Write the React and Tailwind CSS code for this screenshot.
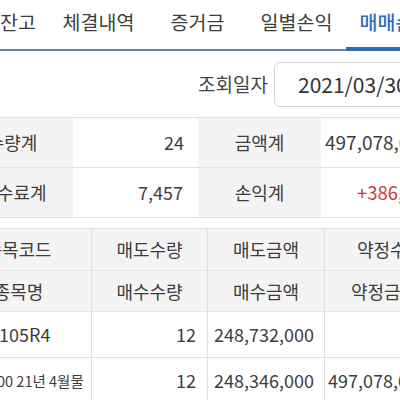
import React from "react";

const tabs = ["잔고", "체결내역", "증거금", "일별손익", "매매손익"];

const App = () => {
  return (
    <div className="w-[400px] h-[400px] overflow-hidden bg-white text-[#3d3d3d] font-['Noto_Sans_CJK_KR',sans-serif]">
      {/* Tabs */}
      <div className="flex h-[51px] w-[460px]">
        {tabs.map((t, i) => (
          <div
            key={t}
            className={
              i === 0
                ? "w-[49px] shrink-0 flex items-center pb-[5px] text-[19.5px] border-b-2 border-[#5a87c4]"
                : i === 4
                ? "w-[99px] shrink-0 flex items-center justify-center pb-[3px] text-[19.5px] font-medium text-[#2c6cb8] border-b-4 border-[#2f6db5]"
                : "w-[99px] shrink-0 flex items-center justify-center pb-[5px] text-[19.5px] border-b-2 border-[#5a87c4]"
            }
          >
            {t}
          </div>
        ))}
      </div>

      {/* Search date */}
      <div className="flex items-center justify-end mt-[11px] h-[45px] -mr-[40px]">
        <span className="text-[19px] text-[#444]">조회일자</span>
        <div className="ml-[6px] w-[166px] h-[45px] flex items-center pl-[23px] border border-[#d6d6d6] rounded-md text-[21px] text-[#333]">
          2021/03/30
        </div>
      </div>

      {/* Summary */}
      <div className="mt-[10px] -ml-[48px] w-[520px] border-t border-[#e2e2e2]">
        <div className="flex h-[50px] border-b border-[#e2e2e2] text-[18px]">
          <div className="w-[121px] bg-[#f4f4f4] flex items-center justify-center">수량계</div>
          <div className="w-[125px] flex items-center justify-end pr-[14px]">24</div>
          <div className="w-[123px] bg-[#f4f4f4] flex items-center justify-center">금액계</div>
          <div className="w-[150px] flex items-center pl-[4px] text-[19px]">497,078,000</div>
        </div>
        <div className="flex h-[50px] border-b border-[#e2e2e2] text-[18px]">
          <div className="w-[121px] bg-[#f4f4f4] flex items-center justify-center pl-[2px]">수수료계</div>
          <div className="w-[125px] flex items-center justify-end pr-[15px]">7,457</div>
          <div className="w-[123px] bg-[#f4f4f4] flex items-center justify-center">손익계</div>
          <div className="w-[150px] flex items-center pl-[36px] text-[18.5px] text-[#d0393b]">+386,000</div>
        </div>
      </div>

      {/* Detail */}
      <div className="mt-[10px] -ml-[54px] w-[530px] border-t border-[#e2e2e2] text-[18px]">
        <div className="flex h-[42px] bg-[#f4f4f4] border-b border-[#e2e2e2]">
          <div className="w-[146px] flex items-center justify-center border-r border-[#e2e2e2]">종목코드</div>
          <div className="w-[116px] flex items-center justify-center border-r border-[#e2e2e2]">매도수량</div>
          <div className="w-[117px] flex items-center justify-center border-r border-[#e2e2e2]">매도금액</div>
          <div className="w-[124px] flex items-center justify-center pl-[6px]">약정수량</div>
        </div>
        <div className="flex h-[41px] bg-[#f4f4f4] border-b border-[#e2e2e2]">
          <div className="w-[146px] flex items-center justify-center border-r border-[#e2e2e2]">종목명</div>
          <div className="w-[116px] flex items-center justify-center border-r border-[#e2e2e2]">매수수량</div>
          <div className="w-[117px] flex items-center justify-center border-r border-[#e2e2e2]">매수금액</div>
          <div className="w-[124px] flex items-center justify-center pr-[6px]">약정금액</div>
        </div>
        <div className="flex h-[46px] border-b border-[#e2e2e2]">
          <div className="w-[146px] flex items-center pl-[53px] border-r border-[#e2e2e2]">105R4</div>
          <div className="w-[116px] flex items-center justify-end pr-[11px] border-r border-[#e2e2e2]">12</div>
          <div className="w-[117px] flex items-center justify-end pr-[10px] border-r border-[#e2e2e2]">248,732,000</div>
          <div className="w-[124px]"></div>
        </div>
        <div className="flex h-[46px] border-b border-[#e2e2e2]">
          <div className="w-[146px] flex items-center pl-[51px] text-[14.5px] border-r border-[#e2e2e2]">00 21년 4월물</div>
          <div className="w-[116px] flex items-center justify-end pr-[11px] border-r border-[#e2e2e2]">12</div>
          <div className="w-[117px] flex items-center justify-end pr-[10px] border-r border-[#e2e2e2]">248,346,000</div>
          <div className="w-[124px] flex items-center pl-[3px]">497,078,000</div>
        </div>
      </div>
    </div>
  );
};

export default App;
